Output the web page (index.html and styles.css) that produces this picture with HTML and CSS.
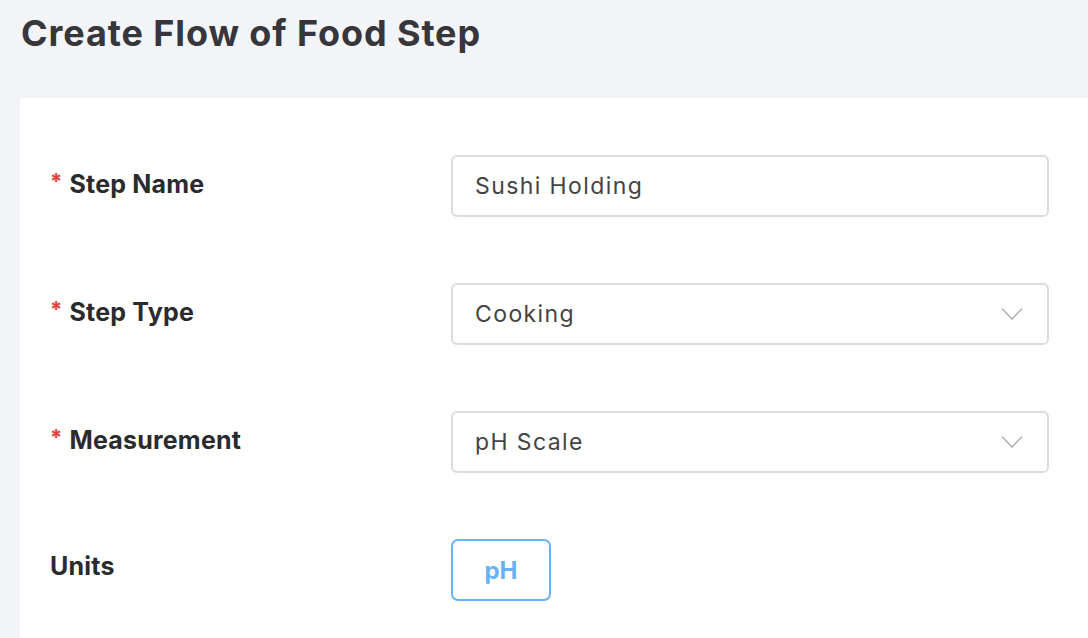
FILE: index.html
```html
<!DOCTYPE html>
<html lang="en">
<head>
    <meta charset="UTF-8">
    <meta name="viewport" content="width=device-width, initial-scale=1.0">
    <title>Create Flow of Food Step</title>
    <link rel="stylesheet" href="styles.css">
</head>
<body>
    <h1 class="page-title">Create Flow of Food Step</h1>

    <div class="form-card">
        <div class="form-row">
            <label class="form-label"><span class="required">*</span>Step Name</label>
            <div class="form-control">
                <input type="text" class="text-input" value="Sushi Holding">
            </div>
        </div>

        <div class="form-row">
            <label class="form-label"><span class="required">*</span>Step Type</label>
            <div class="form-control">
                <div class="select-box">
                    <span>Cooking</span>
                    <svg class="chevron" width="22" height="14" viewBox="0 0 22 14"><path d="M1 1.5 L11 12 L21 1.5" fill="none" stroke="#b3b3b3" stroke-width="1.6"/></svg>
                </div>
            </div>
        </div>

        <div class="form-row">
            <label class="form-label"><span class="required">*</span>Measurement</label>
            <div class="form-control">
                <div class="select-box">
                    <span>pH Scale</span>
                    <svg class="chevron" width="22" height="14" viewBox="0 0 22 14"><path d="M1 1.5 L11 12 L21 1.5" fill="none" stroke="#b3b3b3" stroke-width="1.6"/></svg>
                </div>
            </div>
        </div>

        <div class="form-row">
            <label class="form-label units-label">Units</label>
            <div class="form-control">
                <button class="unit-button">pH</button>
            </div>
        </div>
    </div>
</body>
</html>
```

FILE: styles.css
```css
body {
    margin: 0;
    font-family: Inter, Lato, Arial, sans-serif;
    background-color: #f3f4f8;
    color: #2b2b2e;
    overflow: hidden;
}

.page-title {
    margin: 0;
    padding: 11px 21px 0;
    height: 86px;
    box-sizing: border-box;
    font-size: 36px;
    line-height: 44px;
    font-weight: 700;
    letter-spacing: 0.9px;
    color: #36363b;
}

.form-card {
    margin-top: 12px;
    margin-left: 20px;
    background-color: #fff;
    border-radius: 4px 0 0 0;
    padding: 57px 39px 40px 30px;
    display: flex;
    flex-direction: column;
    gap: 66px;
}

.form-row {
    display: grid;
    grid-template-columns: 401px 1fr;
    align-items: center;
    height: 62px;
}

.form-label {
    font-size: 25px;
    font-weight: 700;
    letter-spacing: 0.2px;
    color: #2b2b2e;
    position: relative;
    top: -2px;
}

.units-label {
    top: -4px;
}

.required {
    color: #e8403c;
    font-size: 22px;
    margin-right: 7px;
    position: relative;
    top: -4px;
}

.text-input,
.select-box {
    width: 100%;
    height: 62px;
    box-sizing: border-box;
    border: 2px solid #dcdcdc;
    border-radius: 6px;
    padding: 0 22px;
    font-family: inherit;
    font-size: 23px;
    letter-spacing: 1.4px;
    color: #444;
    background-color: #fff;
    outline: none;
}

.select-box {
    display: flex;
    align-items: center;
    justify-content: space-between;
}

.chevron {
    margin-right: 2px;
    letter-spacing: 0;
}

.unit-button {
    width: 100px;
    height: 62px;
    border: 2px solid #66b2f4;
    border-radius: 7px;
    background-color: #fff;
    color: #66b2f4;
    font-family: inherit;
    font-size: 24px;
    font-weight: 700;
    cursor: pointer;
}
```
